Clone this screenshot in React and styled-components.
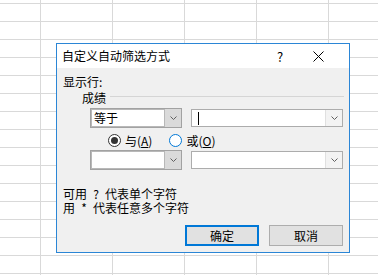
import React from "react";
import styled, { createGlobalStyle } from "styled-components";

const Global = createGlobalStyle`
  html, body { margin: 0; padding: 0; }
  body {
    width: 378px; height: 275px; overflow: hidden;
    font-family: "Noto Sans CJK SC", "Liberation Sans", sans-serif;
    font-size: 12px; color: #000;
  }
`;

const Sheet = styled.div`
  width: 378px;
  height: 275px;
  box-sizing: border-box;
  padding: 43px 0 0 56px;
  background-color: #fff;
  background-image:
    linear-gradient(to right, #d9d9d9 1px, transparent 1px),
    linear-gradient(to bottom, #d9d9d9 1px, transparent 1px);
  background-size: 72px 18px;
  background-position: 40px 3px;
`;

const Dialog = styled.div`
  width: 294px;
  height: 210px;
  box-sizing: border-box;
  border: 1px solid #2b86d6;
  background: #f0f0f0;
  display: flex;
  flex-direction: column;
`;

const TitleBar = styled.div`
  height: 25px;
  background: #fff;
  display: flex;
  align-items: center;
  padding-left: 5px;
  font-size: 12px;
`;

const Title = styled.div`
  flex: 1;
  line-height: 14px;
`;

const TitleBtn = styled.div`
  width: ${p => p.$w}px;
  display: flex;
  justify-content: center;
  align-items: center;
  font-size: 13px;
`;

const Body = styled.div`
  flex: 1;
  display: flex;
  flex-direction: column;
  padding: 7px 5px 6px 6px;
`;

const Label = styled.div`
  line-height: 14px;
  height: 14px;
  display: flex;
  align-items: center;
  white-space: nowrap;
`;

const Wild = styled.span`
  display: inline-block;
  width: 18px;
  text-align: center;
`;

const FieldRow = styled.div`
  display: flex;
  align-items: center;
  height: 14px;
  margin-top: 1px;
  padding-left: 19px;
  gap: 4px;
`;

const Sep = styled.div`
  flex: 1;
  height: 1px;
  background: #d5d5d5;
  margin-top: -1px;
`;

const ComboRow = styled.div`
  display: flex;
  align-items: center;
  gap: 9px;
  padding-left: 27px;
  margin-top: ${p => p.$mt}px;
  height: 20px;
`;

const ListCombo = styled.div`
  width: 92px;
  height: 20px;
  box-sizing: border-box;
  border: 1px solid #a2a2a2;
  box-shadow: inset 0 0 0 1px #b8b8b8;
  background: #fff;
  display: flex;
  align-items: stretch;
`;

const EditCombo = styled.div`
  width: 152px;
  height: 18px;
  box-sizing: border-box;
  border: 1px solid #acacac;
  background: #fff;
  display: flex;
  align-items: stretch;
`;

const ComboText = styled.div`
  flex: 1;
  padding-left: 3px;
  display: flex;
  align-items: center;
  line-height: 14px;
`;

const Caret = styled.div`
  width: 1px;
  height: 13px;
  background: #000;
  margin-left: 3px;
`;

const DropBtn = styled.div`
  width: ${p => p.$w}px;
  display: flex;
  align-items: center;
  justify-content: center;
  background: ${p => p.$bg};
  border-left: 1px solid ${p => p.$line};
  box-sizing: border-box;
`;

const Chevron = () => (
  <svg width="7" height="4" viewBox="0 0 7 4">
    <polyline points="0.5,0.5 3.5,3.5 6.5,0.5" fill="none" stroke="#606060" strokeWidth="1" />
  </svg>
);

const RadioRow = styled.div`
  display: flex;
  align-items: center;
  height: 14px;
  margin-top: 5px;
  padding-left: 45px;
`;

const RadioItem = styled.div`
  display: flex;
  align-items: center;
  gap: 4px;
  margin-right: ${p => p.$mr || 0}px;
`;

const Radio = styled.div`
  width: 13px;
  height: 13px;
  box-sizing: border-box;
  border-radius: 50%;
  border: 1px solid ${p => (p.$focus ? "#0078d7" : "#333")};
  background: #fff;
  display: flex;
  align-items: center;
  justify-content: center;
  &::after {
    content: "";
    display: ${p => (p.$on ? "block" : "none")};
    width: 7px;
    height: 7px;
    border-radius: 50%;
    background: #333;
  }
`;

const Hints = styled.div`
  margin-top: 17px;
  display: flex;
  flex-direction: column;
`;

const Buttons = styled.div`
  margin-top: 10px;
  display: flex;
  justify-content: flex-end;
  gap: 10px;
  padding-right: 1px;
`;

const Button = styled.div`
  width: 74px;
  height: 21px;
  box-sizing: border-box;
  background: #e1e1e1;
  border: ${p => (p.$default ? "2px solid #0078d7" : "1px solid #adadad")};
  display: flex;
  align-items: center;
  justify-content: center;
  line-height: 14px;
`;

export default function App() {
  return (
    <>
      <Global />
      <Sheet>
        <Dialog>
          <TitleBar>
            <Title>自定义自动筛选方式</Title>
            <TitleBtn $w={14}>?</TitleBtn>
            <TitleBtn $w={62}>
              <svg width="11" height="11" viewBox="0 0 11 11">
                <path d="M0.5 0.5 L10.5 10.5 M10.5 0.5 L0.5 10.5" stroke="#000" strokeWidth="1" />
              </svg>
            </TitleBtn>
          </TitleBar>
          <Body>
            <Label>显示行:</Label>
            <FieldRow>
              <span>成绩</span>
              <Sep />
            </FieldRow>
            <ComboRow $mt={4}>
              <ListCombo>
                <ComboText>等于</ComboText>
                <DropBtn $w={17} $bg="#dadada" $line="#b8b8b8"><Chevron /></DropBtn>
              </ListCombo>
              <EditCombo>
                <ComboText><Caret /></ComboText>
                <DropBtn $w={17} $bg="#f3f3f3" $line="#e0e0e0"><Chevron /></DropBtn>
              </EditCombo>
            </ComboRow>
            <RadioRow>
              <RadioItem $mr={17}>
                <Radio $on />
                <span>与(<u>A</u>)</span>
              </RadioItem>
              <RadioItem>
                <Radio $focus />
                <span>或(<u>O</u>)</span>
              </RadioItem>
            </RadioRow>
            <ComboRow $mt={3}>
              <ListCombo>
                <ComboText />
                <DropBtn $w={17} $bg="#dadada" $line="#b8b8b8"><Chevron /></DropBtn>
              </ListCombo>
              <EditCombo>
                <ComboText />
                <DropBtn $w={17} $bg="#f3f3f3" $line="#e0e0e0"><Chevron /></DropBtn>
              </EditCombo>
            </ComboRow>
            <Hints>
              <Label>可用<Wild>?</Wild>代表单个字符</Label>
              <Label>用<Wild>*</Wild>代表任意多个字符</Label>
            </Hints>
            <Buttons>
              <Button $default>确定</Button>
              <Button>取消</Button>
            </Buttons>
          </Body>
        </Dialog>
      </Sheet>
    </>
  );
}
